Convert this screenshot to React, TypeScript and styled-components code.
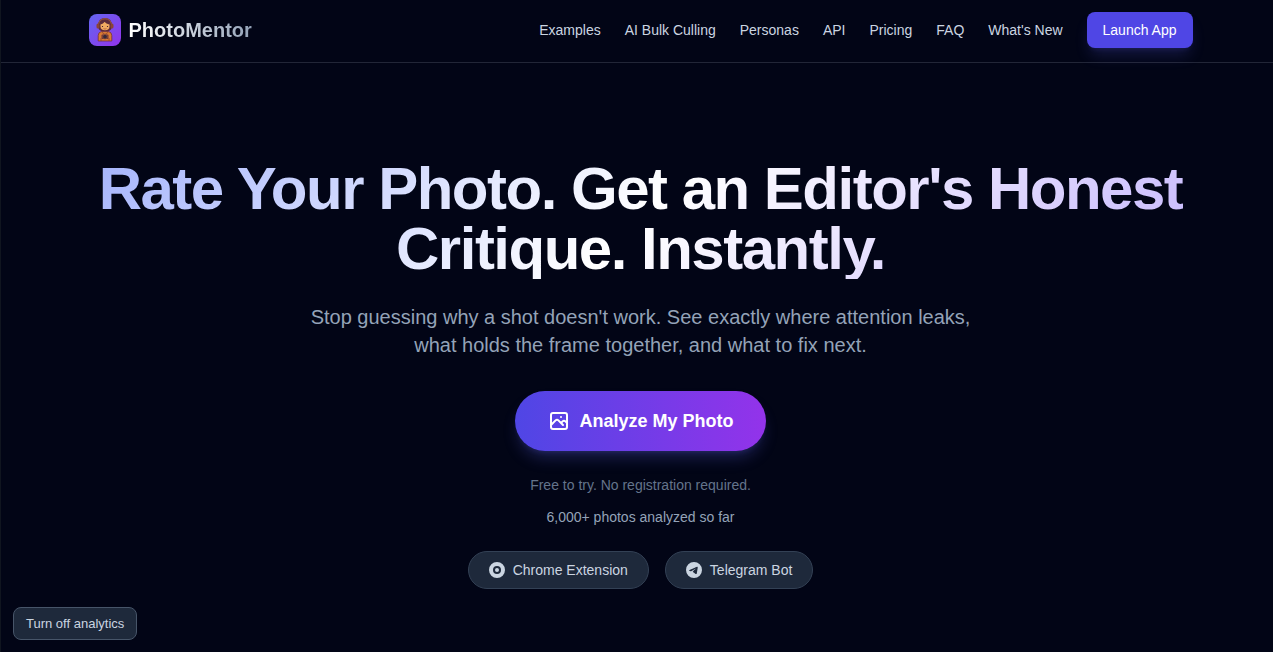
import React from "react";
import styled, { createGlobalStyle, css } from "styled-components";

const GlobalStyle = createGlobalStyle`
  *, *::before, *::after { box-sizing: border-box; }
  body {
    margin: 0;
    background: #020516;
    color: #e2e8f0;
    font-family: "Liberation Sans", Arial, sans-serif;
  }
  h1, p { margin: 0; }
`;

const Page = styled.div`
  min-height: 100vh;
  border-left: 1px solid #10151f;
  background: #020516;
`;

const Header = styled.header`
  padding: 12px 24px 14px 31px;
  border-bottom: 1px solid #222637;
`;

const HeaderInner = styled.div`
  display: flex;
  align-items: center;
  justify-content: space-between;
  max-width: 1104px;
  margin: 0 auto;
`;

const Brand = styled.a`
  display: flex;
  align-items: center;
  gap: 8px;
  text-decoration: none;
`;

const BrandMark = styled.span`
  display: flex;
  width: 32px;
  height: 32px;
  border-radius: 8px;
  background: linear-gradient(135deg, #6366f1, #9333ea);
`;

const BrandName = styled.span`
  font-size: 20px;
  line-height: 28px;
  font-weight: 700;
  color: transparent;
  background: linear-gradient(to right, #ffffff, #94a3b8);
  background-clip: text;
`;

const Nav = styled.nav`
  display: flex;
  align-items: center;
  gap: 24px;
`;

const NavLink = styled.a`
  font-size: 14px;
  line-height: 20px;
  color: #cbd5e1;
  text-decoration: none;
  white-space: nowrap;
`;

const LaunchLink = styled(NavLink)`
  padding: 8px 16px;
  border-radius: 8px;
  color: #ffffff;
  background: #4f46e5;
  box-shadow: 0 10px 15px -3px rgba(99, 102, 241, 0.2), 0 4px 6px -4px rgba(99, 102, 241, 0.2);
`;

const Hero = styled.main`
  display: flex;
  flex-direction: column;
  align-items: center;
  padding: 96px 24px 62px 31px;
  text-align: center;
`;

const Title = styled.h1`
  max-width: 1104px;
  margin-bottom: 24px;
  font-size: 60px;
  line-height: 60px;
  font-weight: 700;
  letter-spacing: -0.025em;
  color: transparent;
  background: linear-gradient(135deg, #a5b4fc, #ffffff, #c4b5fd);
  background-clip: text;
`;

const Lead = styled.p`
  max-width: 672px;
  margin-bottom: 32px;
  font-size: 20px;
  line-height: 28px;
  color: #94a3b8;
`;

const AnalyzeButton = styled.button`
  display: flex;
  align-items: center;
  gap: 8px;
  margin-bottom: 24px;
  padding: 16px 32px;
  border: 0;
  border-radius: 30px;
  font-family: inherit;
  font-size: 18px;
  line-height: 28px;
  font-weight: 700;
  color: #ffffff;
  background: linear-gradient(to right, #4f46e5, #9333ea);
  box-shadow: 0 10px 15px -3px rgba(99, 102, 241, 0.25), 0 4px 6px -4px rgba(99, 102, 241, 0.25);
  cursor: pointer;
`;

const Note = styled.p<{ $bright?: boolean }>`
  font-size: 14px;
  line-height: 20px;
  color: ${({ $bright }) => ($bright ? "#94a3b8" : "#64748b")};
  & + & { margin-top: 12px; }
`;

const Channels = styled.div`
  display: flex;
  flex-wrap: wrap;
  justify-content: center;
  gap: 16px;
  margin-top: 24px;
`;

const softSurface = css`
  border: 1px solid #334155;
  background: #1e293b;
  color: #cbd5e1;
`;

const ChannelLink = styled.a`
  ${softSurface}
  display: flex;
  align-items: center;
  gap: 8px;
  padding: 8px 20px;
  border-radius: 19px;
  font-size: 14px;
  line-height: 20px;
  text-decoration: none;
`;

const AnalyticsButton = styled.button`
  ${softSurface}
  position: fixed;
  left: 13px;
  bottom: 12px;
  padding: 8px 12px;
  border-color: #475569;
  border-radius: 8px;
  font-family: inherit;
  font-size: 13px;
  line-height: 15px;
  cursor: pointer;
`;

const navItems = ["Examples", "AI Bulk Culling", "Personas", "API", "Pricing", "FAQ", "What's New"];

function MentorIcon() {
  return (
    <svg width="32" height="32" viewBox="0 0 32 32" aria-hidden="true">
      <path d="M9 12q0-8 7-8t7 8q0 4-4 5.500h-6Q9 16 9 12z" fill="#5a2a3c" />
      <path d="M9.500 10.500Q10.500 4.800 16 4.800t6.500 5.700" fill="none" stroke="#a35a3c" strokeWidth="1" />
      <rect x="7.500" y="9.500" width="3" height="5" rx="1.500" fill="#8a4434" />
      <rect x="21.500" y="9.500" width="3" height="5" rx="1.500" fill="#8a4434" />
      <path d="M11.500 11q0-3 4.500-3t4.500 3v1.500q0 3.800-4.500 3.800t-4.500-3.800z" fill="#f0aa62" />
      <path d="M11.500 10.500q3-.5 4-2.800 1.500 2.300 5 2.800l-1-3h-7z" fill="#5a2a3c" />
      <path d="M13.500 12v1M18.500 12v1" stroke="#4b2430" strokeWidth="1.100" />
      <path d="M14.500 14.600q1.500 1 3 0" fill="none" stroke="#a34b33" strokeWidth=".7" />
      <path d="M9.200 27v-5.500q0-3.200 3.300-4h7q3.300.8 3.300 4V27z" fill="#d87a34" stroke="#74323a" strokeWidth=".8" />
      <path d="M12.500 18l3.500 2.500 3.500-2.500M12 24v3M20 24v3" stroke="#8f452f" strokeWidth=".8" fill="none" />
      <rect x="12.500" y="20.500" width="7" height="4.500" rx="1" fill="#6c3538" />
      <circle cx="16" cy="22.700" r="2.300" fill="#352838" stroke="#94503c" strokeWidth=".7" />
    </svg>
  );
}

function PhotoIcon() {
  return (
    <svg width="24" height="24" viewBox="0 0 24 24" fill="none" stroke="currentColor" strokeWidth="2" strokeLinecap="round" strokeLinejoin="round" aria-hidden="true">
      <path d="M4 16l4.586-4.586a2 2 0 012.828 0L16 16m-2-2l1.586-1.586a2 2 0 012.828 0L20 14m-6-6h.01M6 20h12a2 2 0 002-2V6a2 2 0 00-2-2H6a2 2 0 00-2 2v12a2 2 0 002 2z" />
    </svg>
  );
}

function ChromeIcon() {
  return (
    <svg width="16" height="16" viewBox="0 0 24 24" fill="currentColor" aria-hidden="true">
      <path fillRule="evenodd" d="M12 0a12 12 0 100 24 12 12 0 000-24zm0 6a6 6 0 110 12 6 6 0 010-12z" />
      <circle cx="12" cy="12" r="3" />
    </svg>
  );
}

function TelegramIcon() {
  return (
    <svg width="16" height="16" viewBox="0 0 24 24" fill="currentColor" aria-hidden="true">
      <path d="M11.944 0A12 12 0 0 0 0 12a12 12 0 0 0 12 12 12 12 0 0 0 12-12A12 12 0 0 0 12 0a12 12 0 0 0-.056 0zm4.962 7.224c.1-.002.321.023.465.14a.506.506 0 0 1 .171.325c.016.093.036.306.02.472-.18 1.898-.962 6.502-1.36 8.627-.168.9-.499 1.201-.82 1.23-.696.065-1.225-.46-1.9-.902-1.056-.693-1.653-1.124-2.678-1.8-1.185-.78-.417-1.21.258-1.91.177-.184 3.247-2.977 3.307-3.23.007-.032.014-.15-.056-.212s-.174-.041-.249-.024c-.106.024-1.793 1.14-5.061 3.345-.48.33-.913.49-1.302.48-.428-.008-1.252-.241-1.865-.44-.752-.245-1.349-.374-1.297-.789.027-.216.325-.437.893-.663 3.498-1.524 5.83-2.529 6.998-3.014 3.332-1.386 4.025-1.627 4.476-1.635z" />
    </svg>
  );
}

export default function App() {
  return (
    <Page>
      <GlobalStyle />
      <Header>
        <HeaderInner>
          <Brand href="#">
            <BrandMark><MentorIcon /></BrandMark>
            <BrandName>PhotoMentor</BrandName>
          </Brand>
          <Nav>
            {navItems.map((item) => (
              <NavLink key={item} href="#">{item}</NavLink>
            ))}
            <LaunchLink href="#">Launch App</LaunchLink>
          </Nav>
        </HeaderInner>
      </Header>
      <Hero>
        <Title>Rate Your Photo. Get an Editor's Honest Critique. Instantly.</Title>
        <Lead>
          Stop guessing why a shot doesn't work. See exactly where attention leaks, what holds the
          frame together, and what to fix next.
        </Lead>
        <AnalyzeButton type="button">
          <PhotoIcon />
          Analyze My Photo
        </AnalyzeButton>
        <Note>Free to try. No registration required.</Note>
        <Note $bright>6,000+ photos analyzed so far</Note>
        <Channels>
          <ChannelLink href="#"><ChromeIcon />Chrome Extension</ChannelLink>
          <ChannelLink href="#"><TelegramIcon />Telegram Bot</ChannelLink>
        </Channels>
      </Hero>
      <AnalyticsButton type="button">Turn off analytics</AnalyticsButton>
    </Page>
  );
}
